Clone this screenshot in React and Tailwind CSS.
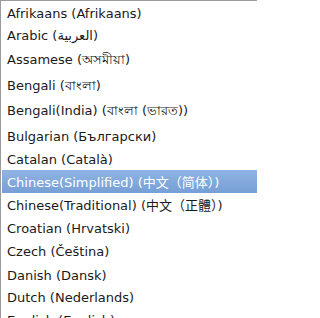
import React from "react";

const languages = [
  { label: "Afrikaans (Afrikaans)", h: "h-[22px]" },
  { label: "Arabic (العربية)", h: "h-[24px]" },
  { label: "Assamese (অসমীয়া)", h: "h-[26px]" },
  { label: "Bengali (বাংলা)", h: "h-[25px]" },
  { label: "Bengali(India) (বাংলা (ভারত))", h: "h-[26px]" },
  { label: "Bulgarian (Български)", h: "h-[23px]" },
  { label: "Catalan (Català)", h: "h-[23px]" },
  { label: "Chinese(Simplified) (中文（简体）)", h: "h-[23px]", selected: true },
  { label: "Chinese(Traditional) (中文（正體）)", h: "h-[23px]" },
  { label: "Croatian (Hrvatski)", h: "h-[23px]" },
  { label: "Czech (Čeština)", h: "h-[24px]" },
  { label: "Danish (Dansk)", h: "h-[22px]" },
  { label: "Dutch (Nederlands)", h: "h-[23px]" },
  { label: "English (English)", h: "h-[23px]" },
];

const App = () => {
  return (
    <div className="w-[257px] h-[318px] overflow-hidden bg-white border-l border-t border-[#9b9b9b] font-['DejaVu_Sans','Noto_Sans_CJK_SC',sans-serif] text-[13px]">
      {/* language list */}
      <ul className="pl-px">
        {languages.map((lang) => (
          <li
            key={lang.label}
            className={`${lang.h} overflow-hidden whitespace-nowrap pl-[5px] pt-[2px] leading-[21px] ${
              lang.selected
                ? "bg-linear-to-b from-[#8fb4e4] to-[#779fd5] text-white"
                : "text-[#1a1a1a]"
            }`}
          >
            {lang.label}
          </li>
        ))}
      </ul>
    </div>
  );
};

export default App;
